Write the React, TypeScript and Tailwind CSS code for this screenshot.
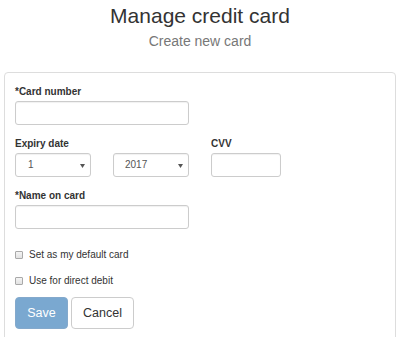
import React from 'react';

const font = { fontFamily: '"Liberation Sans", Arial, sans-serif' };

const SelectBox: React.FC<{ value: string; valueClass: string }> = ({ value, valueClass }) => (
  <div className="flex h-[24px] w-[76px] items-center justify-between rounded-[3px] border border-[#cccccc] bg-white pr-[5px] shadow-[inset_0_1px_1px_rgba(0,0,0,0.06)]">
    <span className={`text-[10px] leading-[14px] text-[#555555] ${valueClass}`}>{value}</span>
    <svg width="5" height="4" viewBox="0 0 5 4" className="mt-[1px]">
      <path d="M0 0 L5 0 L2.5 4 Z" fill="#555555" />
    </svg>
  </div>
);

const Checkbox: React.FC<{ label: string; className: string }> = ({ label, className }) => (
  <label className={`flex items-center gap-[6px] ${className}`}>
    <span className="h-[8px] w-[8px] rounded-[1px] border border-[#a9a9a9] bg-gradient-to-b from-[#f4f4f4] to-[#e2e2e2]" />
    <span className="text-[10px] leading-[14px] text-[#333333]">{label}</span>
  </label>
);

export default function App() {
  const inputClass =
    'block h-[24px] rounded-[3px] border border-[#cccccc] bg-white shadow-[inset_0_1px_1px_rgba(0,0,0,0.06)]';
  const labelClass = 'block text-[10px] font-bold leading-[14px] text-[#333333] mb-[2px]';

  return (
    <div className="min-h-[337px] bg-white pt-[4px]" style={font}>
      <h1 className="text-center text-[21px] font-normal leading-[24px] text-[#333333]">Manage credit card</h1>
      <p className="mt-[3px] text-center text-[14px] leading-[20px] text-[#777777]">Create new card</p>

      {/* Panel */}
      <div className="mx-[4px] mt-[21px] rounded-[4px] border border-[#dddddd] px-[10px] pb-[20px] pt-[12px]">
        {/* Card number */}
        <div>
          <span className={labelClass}>*Card number</span>
          <div className={`${inputClass} w-[174px]`} />
        </div>

        {/* Expiry and CVV */}
        <div className="mt-[12px] flex">
          <div className="w-[174px]">
            <span className={labelClass}>Expiry date</span>
            <div className="flex justify-between">
              <SelectBox value="1" valueClass="pl-[12px]" />
              <SelectBox value="2017" valueClass="pl-[11px]" />
            </div>
          </div>
          <div className="ml-[22px]">
            <span className={labelClass}>CVV</span>
            <div className={`${inputClass} w-[70px]`} />
          </div>
        </div>

        {/* Name on card */}
        <div className="mt-[12px]">
          <span className={labelClass}>*Name on card</span>
          <div className={`${inputClass} w-[174px]`} />
        </div>

        <Checkbox label="Set as my default card" className="mt-[19px]" />
        <Checkbox label="Use for direct debit" className="mt-[12px]" />

        <div className="mt-[9px] flex gap-[3px]">
          <button
            type="button"
            disabled
            className="flex h-[32px] w-[53px] items-center justify-center rounded-[4px] border border-[#84a9cc] bg-[#7aa8d0] text-[12.5px] text-white"
          >
            Save
          </button>
          <button
            type="button"
            className="flex h-[32px] w-[63px] items-center justify-center rounded-[4px] border border-[#cccccc] bg-white text-[12.5px] text-[#333333]"
          >
            Cancel
          </button>
        </div>
      </div>
    </div>
  );
}
